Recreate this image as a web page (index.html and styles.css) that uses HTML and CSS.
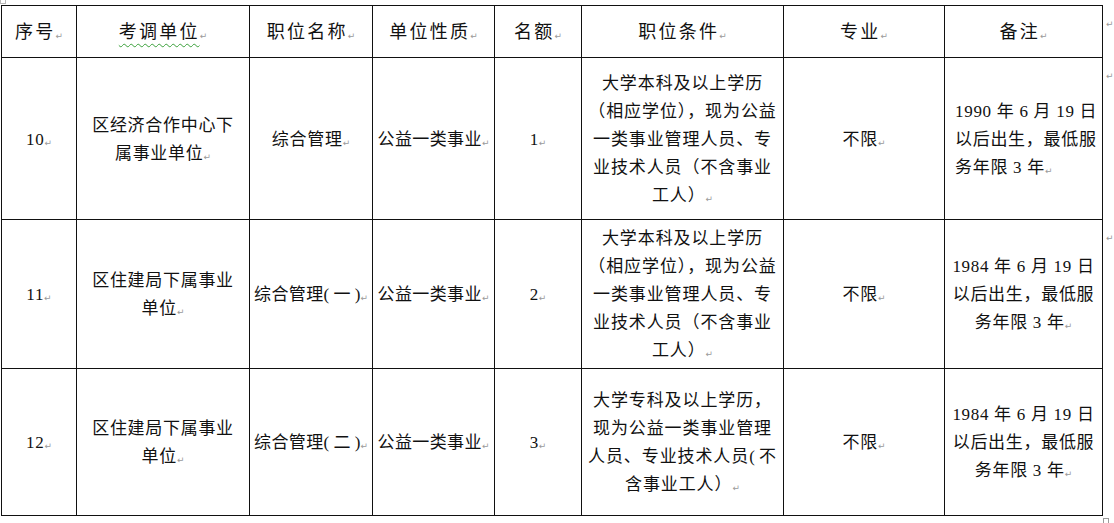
FILE: index.html
```html
<!DOCTYPE html>
<html lang="zh">
<head>
<meta charset="utf-8">
<link rel="stylesheet" href="styles.css">
</head>
<body>
<div class="page">
<span class="handle"></span>
<table class="grid">
<colgroup>
<col class="c1"><col class="c2"><col class="c3"><col class="c4"><col class="c5"><col class="c6"><col class="c7"><col class="c8"><col class="c9">
</colgroup>
<thead>
<tr class="hdr">
<th>序号<span class="pm">↵</span></th>
<th><span class="wavy">考调单位</span><span class="pm">↵</span></th>
<th>职位名称<span class="pm">↵</span></th>
<th>单位性质<span class="pm">↵</span></th>
<th>名额<span class="pm">↵</span></th>
<th>职位条件<span class="pm">↵</span></th>
<th>专业<span class="pm">↵</span></th>
<th>备注<span class="pm">↵</span></th>
<td class="end"><span class="pm">↵</span></td>
</tr>
</thead>
<tbody>
<tr class="r1">
<td>10<span class="pm">↵</span></td>
<td>区经济合作中心下<br>属事业单位<span class="pm">↵</span></td>
<td>综合管理<span class="pm">↵</span></td>
<td class="tight">公益一类事业<span class="pm">↵</span></td>
<td>1<span class="pm">↵</span></td>
<td class="nw">大学本科及以上学历<br>（相应学位），现为公益<br>一类事业管理人员、专<br>业技术人员（不含事业<br>工人）<span class="pm">↵</span></td>
<td>不限<span class="pm">↵</span></td>
<td class="left">1990 年 6 月 19 日<br>以后出生，最低服<br>务年限 3 年<span class="pm">↵</span></td>
<td class="end"><span class="pm">↵</span></td>
</tr>
<tr class="r2">
<td>11<span class="pm">↵</span></td>
<td>区住建局下属事业<br>单位<span class="pm">↵</span></td>
<td class="tight">综合管理<span class="paren">( 一 )</span><span class="pm">↵</span></td>
<td class="tight">公益一类事业<span class="pm">↵</span></td>
<td>2<span class="pm">↵</span></td>
<td class="nw">大学本科及以上学历<br>（相应学位），现为公益<br>一类事业管理人员、专<br>业技术人员（不含事业<br>工人）<span class="pm">↵</span></td>
<td>不限<span class="pm">↵</span></td>
<td>1984 年 6 月 19 日<br>以后出生，最低服<br>务年限 3 年<span class="pm">↵</span></td>
<td class="end"><span class="pm">↵</span></td>
</tr>
<tr class="r3">
<td>12<span class="pm">↵</span></td>
<td>区住建局下属事业<br>单位<span class="pm">↵</span></td>
<td class="tight">综合管理<span class="paren">( 二 )</span><span class="pm">↵</span></td>
<td class="tight">公益一类事业<span class="pm">↵</span></td>
<td>3<span class="pm">↵</span></td>
<td class="nw">大学专科及以上学历，<br>现为公益一类事业管理<br>人员、专业技术人员<span class="paren">( </span>不<br>含事业工人）<span class="pm">↵</span></td>
<td>不限<span class="pm">↵</span></td>
<td>1984 年 6 月 19 日<br>以后出生，最低服<br>务年限 3 年<span class="pm">↵</span></td>
<td class="end"></td>
</tr>
</tbody>
</table>
<div class="foot"><span class="handle2"></span></div>
</div>
</body>
</html>
```

FILE: styles.css
```css
html, body {
  margin: 0;
  padding: 0;
  background: #ffffff;
}
body {
  font-family: "Liberation Serif", "Noto Sans CJK SC", serif;
  color: #111111;
}
.page {
  padding: 5px 0 0 1px;
  width: 1114px;
  box-sizing: border-box;
  position: relative;
}
.handle {
  position: absolute;
  left: 0;
  top: -2px;
  width: 6px;
  height: 6px;
  border: 1px solid #b8b8b8;
  box-sizing: border-box;
  background: #fff;
}
.grid {
  border-collapse: collapse;
  table-layout: fixed;
  width: 1113px;
}
.c1 { width: 75px; }
.c2 { width: 173px; }
.c3 { width: 123px; }
.c4 { width: 122px; }
.c5 { width: 87px; }
.c6 { width: 202px; }
.c7 { width: 161px; }
.c8 { width: 158px; }
.c9 { width: 12px; }
.grid th, .grid td {
  border: 1px solid #111111;
  padding: 5px 4px 0;
  text-align: center;
  vertical-align: middle;
  font-size: 17px;
  line-height: 28px;
  font-weight: normal;
  letter-spacing: 0.7px;
}
.grid th {
  font-size: 18px;
  letter-spacing: 2.2px;
  padding-top: 5px;
}
.grid td.end {
  border: none;
  vertical-align: top;
  padding: 1px 0 0 3px;
  text-align: left;
}
.hdr { height: 52px; }
.r1 { height: 162px; }
.r2 { height: 148px; }
.r3 { height: 147px; }
.grid td.tight {
  padding-left: 0;
  padding-right: 0;
  white-space: nowrap;
  letter-spacing: 0.4px;
}
.grid td.nw {
  padding-left: 0;
  padding-right: 0;
  white-space: nowrap;
  letter-spacing: 0.9px;
}
.grid td.left {
  text-align: left;
  padding-left: 10px;
}
.paren {
  font-family: "Liberation Serif", "Noto Sans CJK SC", serif;
  letter-spacing: 0;
}
.pm {
  font-family: "DejaVu Sans", sans-serif;
  font-size: 9px;
  color: #9a9a9a;
  letter-spacing: 0;
  vertical-align: -1px;
  margin-left: 0;
}
.wavy {
  text-decoration-line: underline;
  text-decoration-style: wavy;
  text-decoration-color: #3aa03a;
  text-decoration-thickness: 1px;
  text-underline-offset: 5px;
}
.foot {
  display: flex;
  justify-content: flex-end;
  width: 1108px;
}
.handle2 {
  width: 6px;
  height: 6px;
  margin-top: 2px;
  border: 1px solid #9a9a9a;
  box-sizing: border-box;
}
```
